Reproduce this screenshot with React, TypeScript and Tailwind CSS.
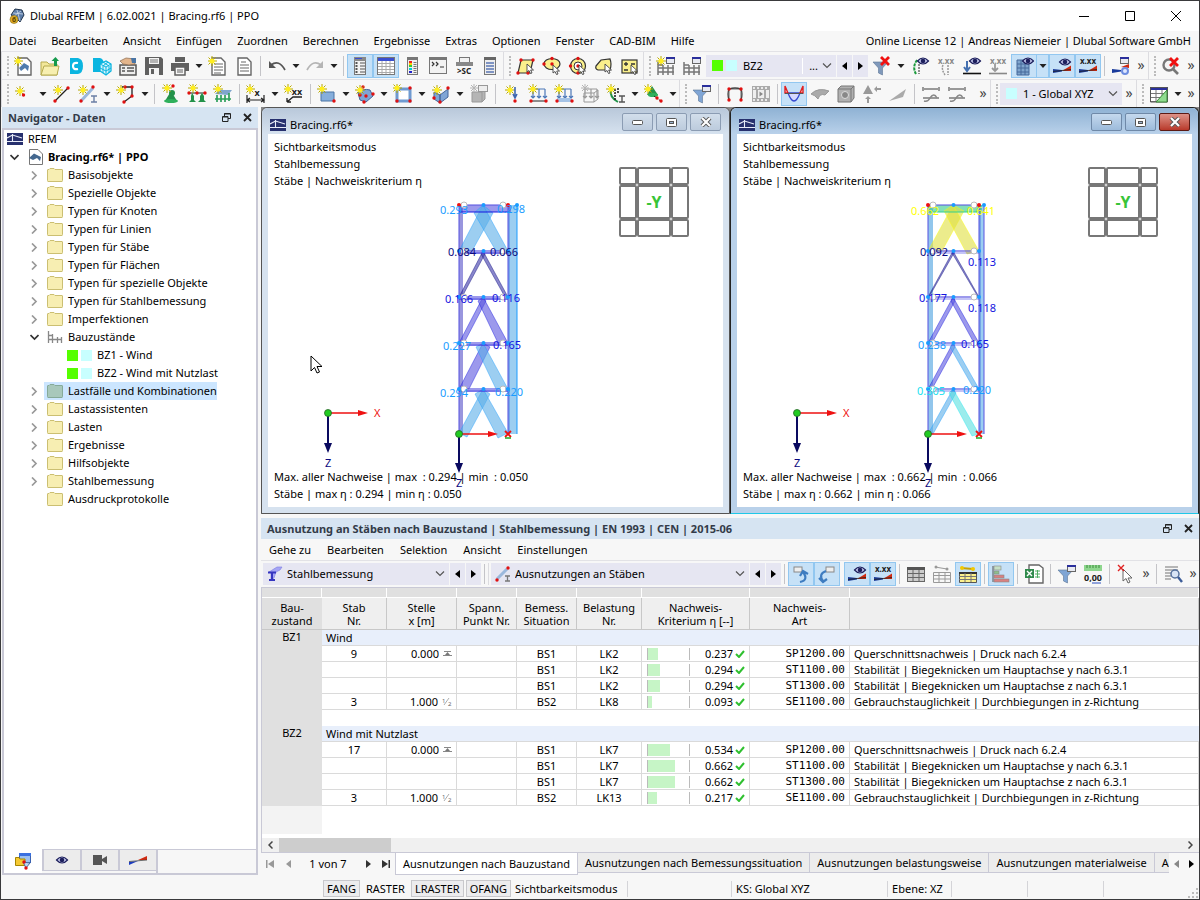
import React, { ReactNode } from 'react';

type IconProps = { name: string };

const star = (x: number, y: number) => (
  <g transform={`translate(${x} ${y})`}>
    <path d="M0-5V5M-5 0H5M-3.5-3.5L3.5 3.5M3.5-3.5L-3.5 3.5" stroke="#b8a800" strokeWidth="1" />
    <circle r="2.6" fill="#ffee20" />
  </g>
);
const dot = (x: number, y: number) => <circle cx={x} cy={y} r="1.7" fill="#e01010" />;
const eye = (x: number, y: number) => (
  <g transform={`translate(${x} ${y})`}>
    <path d="M-5.500 0Q0-6 5.500 0Q0 6-5.500 0Z" fill="#c8ccf0" stroke="#1d1f5c" strokeWidth="1.200" />
    <circle r="2.300" fill="#1d1f5c" />
  </g>
);
const digits = (y: number, color: string) => (
  <text x="10" y={y} textAnchor="middle" fontSize="8" fontWeight="700" fill={color}>x.xx</text>
);
const cursor = (x: number, y: number) => (
  <path transform={`translate(${x} ${y})`} d="M0 0V8L2 6.500L3.500 9.500L5 9L3.700 6H6.500Z" fill="#fff" stroke="#444" strokeWidth="0.9" />
);
const wedge = <path d="M1 17V13L10 14V15.500Z" fill="#1b3c9c" />;
const redWedge = <path d="M10 15L19 9.500V15Z" fill="#d02a10" />;
const resultLine = <path d="M1 15.500L19 13.500" stroke="#222" strokeWidth="0.800" />;
const page = <path d="M4 2H13L17 6V19H4Z" fill="#fff" stroke="#666" strokeWidth="1.4" />;
const miniWindow = (x: number, y: number) => (
  <g transform={`translate(${x} ${y})`}>
    <rect x="0.500" y="0.500" width="8" height="6" fill="#e8eaf2" stroke="#666" />
    <rect width="9" height="2" fill="#2a2f9c" />
  </g>
);
const funnel = (color: string) => <path d="M1 6H16L10.500 12V19L6.500 17V12Z" fill={color} stroke="#5c7696" strokeWidth="0.6" />;
const frames = (color: string) => <path d="M2 6V19M7 9V19M12 9V19M17 9V19M2 9H7M2 12H18M2 16H18" stroke={color} strokeWidth="1.5" />;
const loadArrows = (color: string) => <path d="M4 5H17M5 5V14M11 5V14M17 5V14M3 12L5 14L7 12M9 12L11 14L13 12M15 12L17 14L19 12" stroke={color} strokeWidth="1.2" fill="none" />;
const tableGrid = (head: string, line: string, fill: string) => (
  <g>
    <rect x="1.500" y="3.500" width="17" height="14" fill={fill} stroke={line} />
    <rect x="1" y="3" width="18" height="3" fill={head} />
    <path d="M2 9.500H18M2 13.500H18M7 6V18M13 6V18" stroke={line} />
  </g>
);
const redCross = (x: number, y: number) => (
  <path transform={`translate(${x} ${y})`} d="M0 0L8 8M8 0L0 8" stroke="#f01010" strokeWidth="2.800" />
);
const quad = 'M5 4H17L14 17H2Z';

const icons: Record<string, ReactNode> = {
  newModel: <g>{page}<path d="M5 12L10 7L15 10L14 15L11 12L7 15Z" fill="#4f7cae" />{star(4, 5)}</g>,
  open: <g><path d="M1 6H7L9 8H17V19H1Z" fill="#f2e79a" stroke="#b5aa4f" /><path d="M1 19L4 10H19L17 19Z" fill="#f7efb0" stroke="#b5aa4f" /><path d="M14 10V5H11.500L15.500 1L19 5H17V10Z" fill="#149a4c" /></g>,
  center: <g><path d="M4 2H12Q17 3 17 10Q17 17 12 18H4Z" fill="#0bb5e0" /><path d="M12 7Q7 6 7 10Q7 14 12 13" fill="none" stroke="#fff" strokeWidth="2.200" /></g>,
  blocks: <g><path d="M1 2H8Q12 3 12 9V16H1Z" fill="#0bb5e0" /><path d="M8 8L14 5L19 8V15L14 19L8 15Z" fill="#d5f3fc" stroke="#0bb5e0" strokeWidth="1.300" /><path d="M8 8L14 11L19 8M14 11V19M8 12L14 15L19 12M11 6L17 10V17M16 6L11 10V17" stroke="#0bb5e0" fill="none" /></g>,
  manage: <g><rect x="2" y="9" width="16" height="10" fill="#eee" stroke="#555" strokeWidth="1.500" /><path d="M4 12H7M9 12H16M4 15H7M9 15H16" stroke="#555" strokeWidth="1.300" /><path d="M2 5L8 2L17 3V8L11 9L5 8Z" fill="#e3b58c" stroke="#8a6a50" strokeWidth="0.700" /><path d="M13 2H18V7H14Z" fill="#4a75a5" /></g>,
  save: <g><path d="M1 1H17L19 3V19H1Z" fill="#606060" /><rect x="5" y="2" width="10" height="6" fill="#f4f4f4" /><path d="M6 4H14M6 6H14" stroke="#777" /><rect x="5" y="12" width="10" height="7" fill="#f4f4f4" /><rect x="7" y="13" width="3" height="5" fill="#606060" /></g>,
  print: <g><rect x="5" y="1" width="10" height="5" fill="#606060" /><path d="M1 7H19V15H1Z" fill="#606060" /><rect x="5" y="11" width="10" height="8" fill="#f8f8f8" stroke="#606060" strokeWidth="1.500" /><path d="M7 14H13M7 16H13" stroke="#606060" /></g>,
  newReport: <g>{page}<path d="M6 8H15M6 11H15M6 14H15M6 17H13" stroke="#666" />{star(4, 5)}</g>,
  report: <g>{page}<path d="M7 6H12M6 9H15M6 12H15M6 15H15" stroke="#666" strokeWidth="1.200" /></g>,
  undo: <g><path d="M4 9Q12 3 18 14" fill="none" stroke="#555" strokeWidth="1.700" /><path d="M2 5V12H9Z" fill="#555" /></g>,
  redo: <g><path d="M16 9Q8 3 2 14" fill="none" stroke="#b5b5b5" strokeWidth="1.700" /><path d="M18 5V12H11Z" fill="#b5b5b5" /></g>,
  panelNav: <g><rect x="4.500" y="1.500" width="11" height="17" fill="#f2f2f2" stroke="#777" /><rect x="4" y="1" width="12" height="4" fill="#888" /><path d="M5 2.500H12" stroke="#3a4fd0" /><path d="M10 7H15M10 10H15M10 13H15M10 16H15" stroke="#555" /><path d="M6.500 6V17" stroke="#555" strokeWidth="2" strokeDasharray="2 1" /></g>,
  panelTable: <g><rect x="1.500" y="1.500" width="17" height="17" fill="#fff" stroke="#777" /><rect x="2" y="2" width="16" height="3" fill="#3a4fd0" /><path d="M2 7.500H18M2 10.500H18M2 13.500H18M2 16.500H18M6 5V18M10 5V18M14 5V18" stroke="#aaa" /></g>,
  panelColor: <g><rect x="5.500" y="1.500" width="10" height="17" fill="#eee" stroke="#777" /><rect x="5" y="1" width="11" height="3" fill="#777" /><path d="M7 6H10" stroke="#e22" strokeWidth="2" /><path d="M7 8H10" stroke="#fc0" strokeWidth="2" /><path d="M7 10H10" stroke="#3c3" strokeWidth="2" /><path d="M7 13H10" stroke="#0cd" strokeWidth="2" /><path d="M7 16H10" stroke="#22c" strokeWidth="2" /><path d="M13 6V17" stroke="#777" strokeDasharray="1 1" strokeWidth="3" /></g>,
  console: <g><rect x="1.500" y="1.500" width="17" height="16" fill="#f2f2f2" stroke="#777" /><rect x="1" y="1" width="18" height="3" fill="#777" /><path d="M4 6L6 8L4 10M8 6L10 8L8 10M12 11H16" fill="none" stroke="#333" strokeWidth="1.200" /></g>,
  script: <g><rect x="5.500" y="1.500" width="10" height="6" fill="#f2f2f2" stroke="#777" /><rect x="2" y="6" width="17" height="4" fill="#888" /><text x="10" y="18" textAnchor="middle" fontSize="8" fontWeight="700" fill="#222">&gt;SC</text></g>,
  panelList: <g><rect x="4.500" y="1.500" width="11" height="17" fill="#eee" stroke="#777" /><rect x="4" y="1" width="12" height="3" fill="#666" /><path d="M6 7H14M6 10H14M6 13H14M6 16H14" stroke="#5b77b5" strokeWidth="1.500" /></g>,
  selPoly: <g><path d={quad} fill="#fbf08c" stroke="#333" strokeWidth="1.200" />{dot(5, 4)}{dot(17, 4)}{dot(2, 17)}{dot(12, 17)}{cursor(11, 8)}</g>,
  selEllipse: <g><ellipse cx="10" cy="8" rx="8" ry="5.500" fill="#fbf08c" stroke="#333" strokeWidth="1.200" />{dot(2, 8)}{dot(10, 2.5)}{dot(10, 8)}{cursor(11, 9)}</g>,
  selRing: <g><circle cx="10" cy="10" r="7.500" fill="#fbf08c" stroke="#333" strokeWidth="1.200" /><circle cx="10" cy="10" r="4" fill="#fff" stroke="#333" />{dot(10, 2.5)}{dot(2.5, 10)}{dot(10, 10)}{dot(10, 17)}{cursor(11, 9)}</g>,
  selLasso: <g><path d="M2 10L7 4L16 3Q18 8 16 14Q8 14 4 14Q1 13 2 10Z" fill="#fbf08c" stroke="#333" strokeWidth="1.200" />{cursor(11, 8)}</g>,
  selSpecial: <g><rect x="2" y="4" width="15" height="13" fill="#fbf08c" stroke="#333" strokeWidth="1.200" /><path d="M4 8H8M6 6V10M4 14H8M11 8H15" stroke="#333" strokeWidth="1.300" />{cursor(11, 9)}</g>,
  newStage: <g>{frames('#777')}{miniWindow(10, 1)}{star(5, 5)}</g>,
  editStage: <g>{frames('#777')}{miniWindow(10, 1)}</g>,
  filterOff: <g>{funnel('#8099bb')}{redCross(9, 1)}</g>,
  eyeDef: <g><path d="M7 4Q2 11 6 18" fill="none" stroke="#1a9a3c" strokeWidth="2" strokeDasharray="3 1" /><path d="M9 8V18" stroke="#222" strokeDasharray="2 1" />{eye(13, 5)}</g>,
  valDef: <g>{digits(8, '#888')}<path d="M7 9Q5 13 9 19M12 9V19" fill="none" stroke="#999" strokeWidth="1.500" strokeDasharray="2 1" /></g>,
  eyeReact: <g><path d="M5 5V14M2 11L5 15L8 11" stroke="#4470b0" strokeWidth="2" fill="none" /><path d="M1 17.500H19" stroke="#111" strokeWidth="1.600" />{eye(13, 5)}</g>,
  valReact: <g>{digits(8, '#888')}<path d="M7 8V15M4 12L7 15L10 12" stroke="#999" strokeWidth="1.800" fill="none" /><path d="M1 17.500H19" stroke="#888" strokeWidth="1.600" /></g>,
  eyeGrid: <g><path d="M3 4H15V19H3Z" fill="#7fa5cd" stroke="#47699a" /><path d="M7 4V19M11 4V19M3 8H15M3 12H15M3 16H15" stroke="#47699a" />{eye(14, 5)}</g>,
  eyeResult: <g>{wedge}{redWedge}{resultLine}{eye(13, 6)}</g>,
  valResult: <g>{wedge}{redWedge}{resultLine}{digits(8, '#222')}</g>,
  resultCfg: <g>{wedge}{miniWindow(9, 1)}<path d="M10 11L18 8V12Z" fill="#d02a10" /><circle cx="14" cy="15" r="3" fill="#dfe8ff" stroke="#6d8de0" strokeWidth="2" /></g>,
  findOff: <g><circle cx="8" cy="9" r="5.500" fill="#f4f4f4" stroke="#777" strokeWidth="2.400" /><path d="M12 13L17 18" stroke="#777" strokeWidth="2.600" />{redCross(9, 2)}</g>,
  node: <g>{star(6, 7)}{dot(9.5, 11)}</g>,
  line: <g><path d="M3 17L16 4" stroke="#222" strokeWidth="1.300" />{dot(3, 17)}{dot(16, 4)}{star(6, 6)}</g>,
  member: <g><path d="M3 17L15 4" stroke="#9bb8dc" strokeWidth="3" />{dot(3, 17)}{dot(15, 3)}{star(5, 6)}<path d="M13 12H19M13 18H19M16 12V18" stroke="#6b7fa5" strokeWidth="1.400" /></g>,
  polyline: <g><path d="M6 3H16V12L8 18" fill="none" stroke="#222" strokeWidth="1.300" />{dot(9, 3)}{dot(16, 3)}{dot(16, 12)}{dot(8, 18)}{star(5, 6)}</g>,
  support: <g><path d="M10 7L16 17H4Z" fill="#23924a" /><ellipse cx="10" cy="17" rx="7" ry="2" fill="#2fb05c" /><circle cx="11" cy="9" r="3" fill="#23924a" />{dot(12, 2)}{star(6, 4)}</g>,
  lineSupport: <g><path d="M2 9H18" stroke="#222" /><path d="M5 9L7 12V16L9 18H2L4 16V12ZM15 9L17 12V16L19 18H11L13 16V12Z" fill="#23924a" />{dot(10, 9)}{dot(18, 9)}{dot(2, 9)}{star(6, 4)}</g>,
  areaSupport: <g><path d="M2 10L6 6H19L15 11Z" fill="#7fa5cd" /><path d="M4 11V18M8 11V18M12 11V18M16 9V17M2 15H18" stroke="#2fa05c" strokeWidth="1.700" />{star(5, 5)}</g>,
  dimension: <g><path d="M1 11V19M18 11V19M1 16H18M4 14L1 16L4 18M15 14L18 16L15 18" stroke="#222" strokeWidth="1.200" fill="none" /><text x="11" y="12" textAnchor="middle" fontSize="9" fontWeight="700" fill="#222">x</text>{star(4, 5)}</g>,
  coord: <g><path d="M3 18L9 13H18M3 18V14M3 18H7" stroke="#222" fill="none" strokeWidth="1.300" /><text x="13" y="11" textAnchor="middle" fontSize="9" fontWeight="700" fill="#222">xx</text>{star(4, 5)}</g>,
  surface: <g><path d="M4 8H17V17H4Z" fill="#86aedb" stroke="#4a75a5" />{dot(17, 17)}{star(5, 5)}</g>,
  solid: <g><path d="M3 9Q8 4 15 6L18 12L11 18L5 16Z" fill="#7fa5d5" stroke="#43659a" />{dot(8, 3)}{dot(5, 11)}{dot(11, 12)}{dot(18, 10)}{dot(9, 18)}{star(5, 6)}</g>,
  opening: <g><rect x="4" y="5" width="13" height="12" fill="#fff" stroke="#6f9ad0" strokeWidth="3" />{dot(4, 4)}{dot(17, 4)}{dot(4, 17)}{dot(17, 17)}{star(4, 4)}</g>,
  member3d: <g><path d="M3 8L9 11V19L3 15ZM9 11L17 5V13L9 19Z" fill="#7fa5d5" stroke="#43659a" />{dot(3, 14)}{dot(17, 4)}{dot(9, 18)}{star(6, 6)}</g>,
  boxGray: <g><path d="M3 8H13V18H3ZM13 8L16 5V15L13 18" fill="#b5b5b5" stroke="#999" /><rect x="9.500" y="1.500" width="9" height="6" fill="#eee" stroke="#999" /><path d="M5 0V8M1 4H9M2 1L8 7M8 1L2 7" stroke="#b5b5b5" /></g>,
  loadNode: <g>{star(8, 6)}<path d="M13 3V13M11 10L13 14L15 10" stroke="#3f68b0" strokeWidth="1.600" fill="none" />{dot(13, 17)}</g>,
  loadMember: <g>{loadArrows('#4c78b8')}<path d="M3 17H18" stroke="#222" />{dot(3, 17)}{dot(18, 17)}{star(5, 5)}</g>,
  loadSurface: <g>{loadArrows('#4c78b8')}<rect x="3" y="14" width="15" height="4" fill="#a5c3e6" />{dot(3, 17)}{dot(18, 17)}{star(5, 5)}</g>,
  loadSolid: <g>{loadArrows('#999')}<path d="M4 9H14V18H4ZM14 9L18 6V15L14 18" fill="none" stroke="#999" /><path d="M5 0V8M1 4H9M2 1L8 7M8 1L2 7" stroke="#b5b5b5" /></g>,
  imperfect: <g><path d="M5 5Q3 13 12 18" stroke="#23924a" strokeWidth="2" fill="none" /><path d="M9 5V17M12 4V10" stroke="#222" strokeDasharray="2 1" strokeWidth="1.600" />{star(5, 5)}<path d="M13 12H19M13 18H19M16 12V18" stroke="#555" strokeWidth="1.400" /></g>,
  release: <g><path d="M8 2L14 11H3Z" fill="#23924a" /><ellipse cx="9" cy="11" rx="5" ry="2" fill="#2fb05c" /><path d="M10 12L18 18" stroke="#222" strokeDasharray="2 1" />{dot(13, 14)}{dot(17, 17)}{star(4, 5)}</g>,
  filterWin: <g>{funnel('#7fa5d5')}{miniWindow(10, 1)}</g>,
  deform: <g><path d="M4 16V5H16V16" fill="none" stroke="#999" strokeWidth="1.500" /><path d="M4 16Q2 10 4 5Q10 3 16 5Q18 10 16 16" fill="none" stroke="#444" strokeWidth="1.300" />{dot(4, 5)}{dot(16, 5)}{dot(4, 16)}{dot(16, 16)}</g>,
  film: <g><rect x="1" y="2" width="18" height="16" fill="#aaa" /><path d="M2 4H18M2 16H18" stroke="#fff" strokeWidth="1.500" strokeDasharray="2 2" /><path d="M2 6H5V14H2ZM7 6H13V14H7ZM15 6H18V14H15Z" fill="#eee" /><path d="M8.500 7.500V12.500L12 10Z" fill="#888" /></g>,
  moment: <g><path d="M4 9Q10 25 16 9Z" fill="#d5d8ff" stroke="#3347d0" strokeWidth="1.300" /><path d="M1 9V2L4 9ZM19 9V2L16 9Z" fill="#f8d8d8" stroke="#e02020" strokeWidth="1.400" /><path d="M1 9.500H19" stroke="#555" /></g>,
  surfGray: <path d="M1 10Q8 3 19 7L15 11Q10 9 8 15Q5 11 1 10Z" fill="#aaa" stroke="#999" />,
  solidGray: <g><path d="M2 5L5 2H18V14L15 18H2Z" fill="#b0b0b0" stroke="#777" /><path d="M2 5H15V18M15 5L18 2" fill="none" stroke="#777" /><circle cx="9" cy="11" r="3.500" fill="#888" stroke="#ddd" /></g>,
  stressGray: <g><path d="M6 1L11 10H1ZM6 12L9 15H7V19H5V15H3Z" fill="#999" /><path d="M12 5L15 2V4H19V6H15V8Z" fill="#999" /></g>,
  wedgeGray: <path d="M1 17L18 5L15 13Z" fill="#aaa" />,
  bars1: <g><path d="M2 5H18M2 14H18" stroke="#999" strokeWidth="2" /><path d="M3 17Q7 18 9 14Q13 8 16 14" fill="none" stroke="#888" strokeWidth="1.500" /><path d="M2 3V7M18 3V7" stroke="#999" strokeWidth="2" /></g>,
  calc: <g>{tableGrid('#2a2f9c', '#777', '#fff')}<path d="M1.500 3.500H18.500V18H1.500Z" fill="none" stroke="#555" /><path d="M18 6V18H7Z" fill="#8fdc8f" stroke="#3c8c3c" /></g>,
  jumpUp: <g><rect x="3" y="3" width="8" height="5" fill="#eee" stroke="#888" /><path d="M9 18Q18 16 12 8M9 12L12 7L17 10" fill="none" stroke="#3e7cc0" strokeWidth="2.200" /></g>,
  jumpDown: <g><rect x="9" y="3" width="8" height="5" fill="#eee" stroke="#888" /><path d="M9 7Q1 10 6 17M2 14L6 18L10 15" fill="none" stroke="#3e7cc0" strokeWidth="2.200" /></g>,
  tableDark: tableGrid('#555', '#666', '#ccc'),
  tableLine: <g><path d="M3 3L15 5" stroke="#999" /><circle cx="4" cy="3" r="1.500" fill="#999" /><circle cx="15" cy="5" r="1.500" fill="#999" /><path d="M1.500 8.500H18.500V18.500H1.500ZM1 11.500H18M1 15H18M7 8V18M13 8V18" fill="none" stroke="#999" /></g>,
  tableYellow: <g><path d="M3 4L15 5" stroke="#c8a200" strokeWidth="2" /><circle cx="4" cy="4" r="2" fill="#f2c800" /><circle cx="15" cy="5" r="2" fill="#f2c800" /><path d="M1.500 8.500H18.500V18.500H1.500Z" fill="#fbf08c" stroke="#555" /><path d="M1 9H19" stroke="#333" strokeWidth="2" /><path d="M1 12.500H18M1 15.500H18M7 9V18M13 9V18" stroke="#777" /></g>,
  chart: <g><path d="M2 2V18" stroke="#555" /><rect x="3" y="2" width="7" height="4" fill="#c5dfc5" stroke="#888" strokeWidth="0.600" /><rect x="3" y="7" width="5" height="3" fill="#8cc08c" stroke="#888" strokeWidth="0.600" /><rect x="3" y="11" width="10" height="3" fill="#d98080" stroke="#888" strokeWidth="0.600" /><rect x="3" y="15" width="15" height="3" fill="#d98080" stroke="#888" strokeWidth="0.600" /></g>,
  excel: <g><path d="M5 1H15L19 4V19H5Z" fill="#fff" stroke="#666" strokeWidth="1.400" /><rect x="1" y="5" width="9" height="9" fill="#2f8a4c" /><path d="M3 7L8 12M8 7L3 12" stroke="#fff" strokeWidth="1.400" /><path d="M11 7H16M11 10H16M11 13H16M13.500 6V14" stroke="#4fae62" /></g>,
  decimals: <g><rect x="1" y="1" width="18" height="6" fill="#8ed68e" /><path d="M4 1V4M7 1V4M10 1V4M13 1V4M16 1V4" stroke="#3c8c3c" /><text x="10" y="17" textAnchor="middle" fontSize="9" fontWeight="700" fill="#222">0,00</text><path d="M9 19H18" stroke="#2a4fc0" /></g>,
  deselect: <g><path d="M7 5V17L10 14.500L12 19L14 18L12 14H16Z" fill="#fff" stroke="#666" /><path d="M2 1L8 7M8 1L2 7" stroke="#e02020" strokeWidth="1.400" /></g>,
  findText: <g><path d="M2 3H15M2 6H15M2 9H8M2 12H8M2 15H8" stroke="#777" strokeWidth="1.200" /><circle cx="12" cy="10" r="4" fill="#d8e4f5" stroke="#55709c" strokeWidth="1.500" /><path d="M15 13L19 18" stroke="#3c5c98" strokeWidth="2.400" /></g>,
  steel: <g><path d="M4 8L12 3H17L15 6L11 8L9 14L6 16V9Z" fill="#a5a5f5" stroke="#7a7ae0" strokeWidth="0.600" /><path d="M3 8.500H11M4 16H10M7 8V16" stroke="#3535c0" strokeWidth="2" /></g>,
  memberSel: <g><path d="M4 15L14 5" stroke="#9bb8dc" strokeWidth="3" />{dot(4, 16)}{dot(15, 4)}<path d="M12 12H17M12 17H17M14.500 12V17" stroke="#777" strokeWidth="1.300" /></g>,
  navData: <g><rect x="6.500" y="2.500" width="11" height="9" fill="#9cc0f0" stroke="#3a62b0" /><rect x="6" y="2" width="12" height="3" fill="#3a70e0" /><path d="M2.500 6.500H6L7 8H12V14.500H2.500Z" fill="#f5c932" stroke="#a88600" /><path d="M10 11L17 12L13 17Z" fill="#bcd5f2" stroke="#4a6ca0" />{dot(11, 11)}{dot(13, 17)}</g>,
  navEye: eye(10, 10),
  navCamera: <g><rect x="3" y="5" width="9" height="10" fill="#555" /><path d="M12 9L17 6V14L12 11Z" fill="#555" /></g>,
  navResult: <g><path d="M1 12V15L10 11Z" fill="#1b3cc0" /><path d="M10 10L19 6V10Z" fill="#d02a10" /><path d="M1 11.500L19 10" stroke="#333" strokeWidth="0.700" /></g>,
};

function Icon({ name }: IconProps) {
  return <svg width="20" height="20" viewBox="0 0 20 20" fill="none" className="shrink-0">{icons[name]}</svg>;
}

function Tool({ name, on }: { name: string, on?: boolean }) {
  return (
    <button
      aria-label={name}
      className={on
        ? "flex h-6 w-[26px] shrink-0 items-center justify-center border border-[#92c7f0] bg-[#c6e1f7]"
        : "flex h-6 w-[26px] shrink-0 items-center justify-center"}
    >
      <Icon name={name} />
    </button>
  );
}

function Tools({ names, on }: { names: string, on?: boolean }) {
  return <>{names.split(' ').map(n => <Tool key={n} name={n} on={on} />)}</>;
}

function Drop({ on }: { on?: boolean }) {
  return (
    <button
      aria-label="Mehr"
      className={on
        ? "flex h-6 w-3 shrink-0 items-center justify-center border border-l-0 border-[#92c7f0] bg-[#c6e1f7]"
        : "flex h-6 w-3 shrink-0 items-center justify-center"}
    >
      <svg width="8" height="4" viewBox="0 0 8 4" className="shrink-0"><path d="M0.500 0H7.500L4 4Z" fill="#222" /></svg>
    </button>
  );
}

const Sep = () => <div className="flex h-5 w-[7px] shrink-0 justify-center"><div className="w-px bg-[#c4c4c8]" /></div>;

const Group = () => (
  <div className="flex h-7 w-[10px] shrink-0 items-center gap-1 border-l border-[#dcdce0]">
    <div className="w-px" />
    <div className="h-5 border-l-2 border-dotted border-[#bbb]" />
  </div>
);

const More = () => <button className="w-3.5 shrink-0 pb-0.5 text-center text-sm leading-4 text-[#444]">»</button>;

function Arrow({ left, bare }: { left?: boolean, bare?: boolean }) {
  return (
    <button
      aria-label={left ? "Zurück" : "Weiter"}
      className={bare ? "flex h-[22px] w-[15px] shrink-0 items-center justify-center" : "flex h-[22px] w-[15px] shrink-0 items-center justify-center bg-[#e6e6f2]"}
    >
      <svg width="5" height="8" viewBox="0 0 5 8"><path d={left ? "M5 0V8L0 4Z" : "M0 0V8L5 4Z"} fill={bare && left ? '#888' : '#000'} /></svg>
    </button>
  );
}

const Chevron = () => (
  <svg width="10" height="6" viewBox="0 0 10 6" className="pointer-events-none mr-1 shrink-0"><path d="M1 0.500L5 4.500L9 0.500" fill="none" stroke="#555" strokeWidth="1.200" /></svg>
);

function Combo({ label, value, children, extra, width }: { label: string, value: string, children?: ReactNode, extra?: ReactNode, width: string }) {
  return (
    <label className={`flex h-[22px] shrink-0 items-center bg-[#e6e6f2] pl-0.5 ${width}`}>
      {children}
      <select aria-label={label} className="h-full min-w-0 flex-1 appearance-none bg-transparent pl-0.5 outline-none">
        <option>{value}</option>
      </select>
      {extra}
      <Chevron />
    </label>
  );
}

function Swatches() {
  return (
    <span className="flex shrink-0 gap-[3px]">
      <span className="size-[11px] bg-[#55ff00]" />
      <span className="size-[11px] bg-[#c8ffff]" />
    </span>
  );
}

function PanelHeader({ title }: { title: string }) {
  return (
    <div className="flex h-[21px] items-center bg-[#d6e4f2] pl-1.5 font-bold text-[#333b48]">
      <h2 className="flex-1 whitespace-nowrap">{title}</h2>
      <button aria-label="Abdocken" className="flex w-[21px] justify-center">
        <svg width="9" height="9" viewBox="0 0 9 9" fill="none" stroke="#222"><path d="M2.500 3V0.500H8.500V5.500H6M0.500 3.500H6V8.500H0.500ZM2 1H8M1 4H6" /></svg>
      </button>
      <button aria-label="Schließen" className="flex w-[21px] justify-center">
        <svg width="9" height="9" viewBox="0 0 9 9"><path d="M1 1L8 8M8 1L1 8" stroke="#222" strokeWidth="1.800" /></svg>
      </button>
    </div>
  );
}

const menu = ['Datei', 'Bearbeiten', 'Ansicht', 'Einfügen', 'Zuordnen', 'Berechnen', 'Ergebnisse', 'Extras', 'Optionen', 'Fenster', 'CAD-BIM', 'Hilfe'];

function TitleBar() {
  return (
    <header>
      <div className="flex h-[30px] items-center bg-white pl-2">
        <svg width="16" height="16" viewBox="0 0 16 16">
          <path d="M2 7L6 1L13 2L15 7L11 14L7 10Z" fill="#5c7ca8" stroke="#22344c" />
          <path d="M4 5L14 6M8 2L11 13M5 8L12 3" stroke="#cfdcec" strokeWidth="0.800" />
          <circle cx="5" cy="11.500" r="4" fill="#e0ae28" stroke="#8a6a10" strokeWidth="0.600" />
          <text x="5" y="14" textAnchor="middle" fontSize="7" fontWeight="700" fill="#5a4300">6</text>
        </svg>
        <h1 className="flex-1 pl-[5px]">Dlubal RFEM | 6.02.0021 | Bracing.rf6 | PPO</h1>
        <button aria-label="Minimieren" className="flex w-[46px] justify-center"><svg width="10" height="10" viewBox="0 0 10 10"><path d="M0 5.500H10" stroke="#000" /></svg></button>
        <button aria-label="Maximieren" className="flex w-[46px] justify-center"><svg width="10" height="10" viewBox="0 0 10 10"><path d="M0.500 0.500H9.500V9.500H0.500Z" fill="none" stroke="#000" /></svg></button>
        <button aria-label="Beenden" className="flex w-[46px] justify-center"><svg width="10" height="10" viewBox="0 0 10 10"><path d="M0 0L10 10M10 0L0 10" stroke="#000" /></svg></button>
      </div>
      <nav className="flex h-5 items-center gap-[15px] px-2 whitespace-nowrap">
        {menu.map(m => <button key={m}>{m}</button>)}
        <span className="flex-1 text-right">Online License 12 | Andreas Niemeier | Dlubal Software GmbH</span>
      </nav>
    </header>
  );
}

function Toolbars() {
  return (
    <div className="overflow-hidden">
      <div className="flex h-7 items-center border-t border-[#e2e2e6]">
        <Group />
        <Tools names="newModel open center blocks manage save print" /><Drop />
        <Tools names="newReport report" /><Sep />
        <Tool name="undo" /><Drop />
        <Tool name="redo" /><Drop /><Sep />
        <Tools names="panelNav panelTable" on />
        <Tools names="panelColor console script panelList" />
        <Group />
        <Tools names="selPoly selEllipse selRing selLasso selSpecial" />
        <Group />
        <Tools names="newStage editStage" />
        <div className="flex gap-px px-px">
          <Combo label="Bauzustand" value="BZ2" width="w-[130px]" extra={<span className="mr-1 border-l border-white pl-1.5">...</span>}>
            <span className="mx-1"><Swatches /></span>
          </Combo>
          <Arrow left /><Arrow />
        </div>
        <Tool name="filterOff" /><Drop />
        <Tools names="eyeDef valDef eyeReact valReact" />
        <Tool name="eyeGrid" on /><Drop on />
        <Tools names="eyeResult valResult" on /><Sep />
        <Tool name="resultCfg" /><More />
        <Group />
        <Tool name="findOff" /><More />
      </div>
      <div className="flex h-7 items-center border-t border-[#e2e2e6]">
        <Group />
        <Tool name="node" /><Drop />
        <Tools names="line member" /><Drop />
        <Tool name="polyline" /><Drop /><Sep />
        <Tools names="support lineSupport areaSupport" /><Sep />
        <Tool name="dimension" /><Drop />
        <Tool name="coord" /><Sep />
        <Tool name="surface" /><Drop />
        <Tool name="solid" /><Drop />
        <Tool name="opening" /><Drop />
        <Tool name="member3d" /><Drop />
        <Tool name="boxGray" /><Sep />
        <Tools names="loadNode loadMember loadSurface loadSolid imperfect" /><Drop />
        <Tool name="release" /><Drop />
        <Group />
        <Tool name="filterWin" /><Sep />
        <Tools names="deform film" /><Sep />
        <Tool name="moment" on />
        <Tools names="surfGray solidGray stressGray wedgeGray" /><Sep />
        <Tool name="bars1" /><Tool name="bars1" />
        <div className="w-1.5 shrink-0" />
        <More />
        <Group />
        <Combo label="Koordinatensystem" value="1 - Global XYZ" width="w-[122px]">
          <span className="mx-1 size-[11px] shrink-0 bg-[#c8ffff]" />
        </Combo>
        <More />
        <Group />
        <Tool name="calc" /><Drop /><More />
      </div>
    </div>
  );
}

const RfemLogo = () => (
  <svg width="16" height="12" viewBox="0 0 16 12" className="shrink-0">
    <rect width="16" height="12" fill="#27306e" />
    <path d="M0 8.500H16M5.500 1V8M0 5L5.500 2L15 5" fill="none" stroke="#e8ecf8" strokeWidth="1.100" />
  </svg>
);

const Expander = ({ open }: { open?: boolean }) => (
  <button aria-label={open ? "Zuklappen" : "Aufklappen"} className="flex w-3 shrink-0 justify-center">
    <svg width="9" height="9" viewBox="0 0 9 9" fill="none">
      {open ? <path d="M0.500 2L4.500 6L8.500 2" stroke="#333" strokeWidth="1.700" /> : <path d="M2 0.500L6 4.500L2 8.500" stroke="#999" strokeWidth="1.700" />}
    </svg>
  </button>
);

const Folder = ({ active }: { active?: boolean }) => (
  <svg width="16" height="14" viewBox="0 0 16 14" className="shrink-0">
    <path d="M0.500 12.500V2Q0.500 1.500 1 1.500H2L3 0.500H7L8 1.500H15Q15.500 1.500 15.500 2V12.500Q15.500 13.500 15 13.500H1Q0.500 13.500 0.500 12.500Z" fill={active ? '#a8c8bb' : '#f7eeb2'} stroke={active ? '#86aa98' : '#cbbf72'} />
  </svg>
);

const foldersTop = ['Basisobjekte', 'Spezielle Objekte', 'Typen für Knoten', 'Typen für Linien', 'Typen für Stäbe', 'Typen für Flächen', 'Typen für spezielle Objekte', 'Typen für Stahlbemessung', 'Imperfektionen'];
const foldersBottom = ['Lastfälle und Kombinationen', 'Lastassistenten', 'Lasten', 'Ergebnisse', 'Hilfsobjekte', 'Stahlbemessung', 'Ausdruckprotokolle'];

function FolderRow({ name }: { name: string }) {
  const active = name === 'Lastfälle und Kombinationen';
  return (
    <li className="flex h-[18px] items-center pl-6">
      {name === 'Ausdruckprotokolle' ? <span className="w-3 shrink-0" /> : <Expander />}
      <span className={active ? "ml-1 flex h-[18px] items-center gap-[5px] bg-[#cce6ff] pl-[3px]" : "ml-1 flex items-center gap-[5px] pl-[3px]"}>
        <Folder active={active} />{name}
      </span>
    </li>
  );
}

function Navigator() {
  return (
    <aside className="flex w-[257px] shrink-0 flex-col pb-[3px] pl-px">
      <PanelHeader title="Navigator - Daten" />
      <div className="flex flex-1 flex-col border-2 border-[#c9c9d6] bg-white">
        <ul className="flex-1 whitespace-nowrap">
          <li className="flex h-[18px] items-center gap-[5px] pl-[3px]"><RfemLogo />RFEM</li>
          <li className="flex h-[18px] items-center gap-[5px] pl-1 font-bold">
            <Expander open />
            <svg width="14" height="16" viewBox="0 0 14 16" className="ml-1 shrink-0"><path d="M0.500 0.500H9L13.500 5V15.500H0.500Z" fill="#fff" stroke="#777" /><path d="M0 9L5 4.500L12 8L11 12L8 9L4 11Z" fill="#44688f" /></svg>
            Bracing.rf6* | PPO
          </li>
          {foldersTop.map(f => <FolderRow key={f} name={f} />)}
          <li className="flex h-[18px] items-center gap-[5px] pl-6">
            <Expander open />
            <svg width="16" height="12" viewBox="0 0 16 12" className="ml-0.5 shrink-0"><path d="M1.500 0V12M5.500 3V12M10.500 6V12M14.500 6V12M1 4.500H6M1 8.500H15" fill="none" stroke="#888" strokeWidth="1.300" /></svg>
            Bauzustände
          </li>
          <li className="flex h-[18px] items-center gap-[5px] pl-[63px]"><Swatches />BZ1 - Wind</li>
          <li className="flex h-[18px] items-center gap-[5px] pl-[63px]"><Swatches />BZ2 - Wind mit Nutzlast</li>
          {foldersBottom.map(f => <FolderRow key={f} name={f} />)}
        </ul>
        <div className="flex h-6 bg-[#f7f7f7]">
          <button aria-label="Daten" className="flex w-[38px] items-center justify-center bg-white"><Icon name="navData" /></button>
          {['navEye', 'navCamera', 'navResult'].map(n => (
            <button key={n} aria-label={n} className="mb-0.5 flex w-[38px] items-center justify-center border-t border-b border-l-2 border-[#c9c9d6] bg-[#ececec]"><Icon name={n} /></button>
          ))}
          <div className="flex-1 border-t border-l-2 border-[#c9c9d6]" />
        </div>
      </div>
    </aside>
  );
}

type Brace = { pts: string, fill: string, line: string };

type Model = {
  x0: number
  x1: number
  colFill: string
  colWidth: number
  rightWidth: number
  rightLine: string
  leftFill: string
  leftLine: string
  beamFill: string
  beamLine: string
  braces: Brace[]
  labels: { x: number, y: number, t: string, c: string }[]
  thick: number
};

const LIGHT = '#5aaee8';
const SKY = '#1a9cff';
const VIOLET = '#5a55e0';
const BLUE = '#1414e0';
const NAVY = '#0a0a80';
const YELLOW = '#ffff00';

// coordinates share the origin of the view's client area
const modelA: Model = {
  x0: 190, x1: 239, colFill: LIGHT, colWidth: 4, rightWidth: 9, rightLine: SKY, leftFill: '#5550c8', leftLine: VIOLET,
  beamFill: VIOLET, beamLine: BLUE, thick: 4,
  braces: [
    { pts: '214,71 190,117 203,117 224,79', fill: LIGHT, line: SKY },
    { pts: '214,71 239,117 227,117 205,79', fill: LIGHT, line: SKY },
    { pts: '214,117 190,163 193,163 216,120', fill: '#3a35a8', line: NAVY },
    { pts: '214,117 239,163 236,163 212,120', fill: '#3a35a8', line: NAVY },
    { pts: '214,163 190,209 195,209 217,167', fill: VIOLET, line: BLUE },
    { pts: '214,163 239,209 229,209 209,167', fill: VIOLET, line: BLUE },
    { pts: '214,209 190,255 200,255 221,213', fill: VIOLET, line: BLUE },
    { pts: '214,209 239,255 227,255 207,213', fill: LIGHT, line: SKY },
    { pts: '214,255 190,299 198,303 221,260', fill: LIGHT, line: SKY },
    { pts: '214,255 239,299 229,304 206,260', fill: LIGHT, line: SKY },
  ],
  labels: [
    { x: 171, y: 80, t: '0.293', c: SKY }, { x: 228, y: 79, t: '0.298', c: SKY },
    { x: 179, y: 122, t: '0.084', c: NAVY }, { x: 221, y: 122, t: '0.066', c: NAVY },
    { x: 176, y: 169, t: '0.166', c: BLUE }, { x: 223, y: 168, t: '0.116', c: BLUE },
    { x: 174, y: 216, t: '0.227', c: SKY }, { x: 224, y: 215, t: '0.165', c: BLUE },
    { x: 171, y: 263, t: '0.294', c: SKY }, { x: 226, y: 262, t: '0.220', c: SKY },
  ],
};

const modelB: Model = {
  x0: 190, x1: 241, colFill: LIGHT, colWidth: 5, rightWidth: 5, rightLine: VIOLET, leftFill: '#4aa0e0', leftLine: VIOLET,
  beamFill: '#30c888', beamLine: '#30d090', thick: 2,
  braces: [
    { pts: '215,71 190,117 204,117 226,77', fill: '#e0e040', line: YELLOW },
    { pts: '215,71 241,117 229,120 206,77', fill: '#e0e040', line: YELLOW },
    { pts: '215,117 190,163 191,163 216,119', fill: '#3a35a8', line: NAVY },
    { pts: '215,117 241,163 240,163 214,119', fill: '#3a35a8', line: NAVY },
    { pts: '215,163 190,209 194,209 217,167', fill: VIOLET, line: BLUE },
    { pts: '215,163 241,209 236,209 213,167', fill: VIOLET, line: BLUE },
    { pts: '215,209 190,255 194,255 217,213', fill: VIOLET, line: BLUE },
    { pts: '215,209 241,255 236,255 212,213', fill: LIGHT, line: SKY },
    { pts: '215,255 190,300 195,300 218,259', fill: LIGHT, line: SKY },
    { pts: '215,255 241,300 234,302 211,259', fill: '#58e0e0', line: '#20e8f0' },
  ],
  labels: [
    { x: 173, y: 81, t: '0.662', c: YELLOW }, { x: 229, y: 81, t: '0.641', c: YELLOW },
    { x: 182, y: 122, t: '0.092', c: NAVY }, { x: 230, y: 132, t: '0.113', c: BLUE },
    { x: 181, y: 168, t: '0.177', c: BLUE }, { x: 230, y: 178, t: '0.118', c: BLUE },
    { x: 180, y: 215, t: '0.238', c: SKY }, { x: 223, y: 214, t: '0.165', c: BLUE },
    { x: 179, y: 261, t: '0.305', c: '#20dff0' }, { x: 225, y: 260, t: '0.220', c: SKY },
  ],
};

const levels = [71, 117, 163, 209, 255];

function Axes({ x, y, len }: { x: number, y: number, len: number }) {
  return (
    <g>
      <path d={`M${x} ${y}H${x + len - 8}`} stroke="#e11" strokeWidth="1.500" />
      <path d={`M${x + len - 10} ${y - 3}V${y + 3}L${x + len} ${y}Z`} fill="#e11" />
      <path d={`M${x} ${y}V${y + len - 8}`} stroke="#0a0a60" strokeWidth="2" />
      <path d={`M${x - 4} ${y + len - 10}H${x + 4}L${x} ${y + len}Z`} fill="#0a0a60" />
      <circle cx={x} cy={y} r="3.500" fill="#2c2" stroke="#286428" strokeWidth="0.800" />
    </g>
  );
}

function Truss({ model }: { model: Model }) {
  const { x0, x1 } = model;
  const mid = (x0 + x1) / 2;
  return (
    <svg width="300" height="370" viewBox="-1 0 300 370" className="absolute top-0 left-0 text-[11px]">
      <g fillOpacity="0.600">
        <rect x={x0} y="71" width={model.colWidth} height="229" fill={model.leftFill} />
        <rect x={x1} y="71" width="2" height="229" fill={VIOLET} />
        <rect x={x1} y="71" width={model.rightWidth} height="229" fill={model.colFill} />
        <rect x={x0} y="71" width={x1 - x0 + 3} height="7" fill={model.beamFill} />
        {model.braces.map(b => (
          <polygon key={b.pts} points={b.pts} fill={b.fill} stroke={b.line} strokeWidth="0.600" strokeOpacity="0.700" />
        ))}
        {levels.slice(1).map(l => <rect key={l} x={x0} y={l - 1} width={x1 - x0} height={model.thick} fill={VIOLET} />)}
      </g>
      <path d={`M${x0} 71V300M${x1} 71V300M${x0} 71H${x1}`} stroke={model.leftLine} strokeWidth="1.500" strokeOpacity="0.700" />
      <path d={`M${x1 + model.rightWidth} 71V300`} stroke={model.rightLine} />
      <path d={`M${x0} 78H${x1}`} stroke={model.beamLine} />
      {levels.map(l => (
        <g key={l}>
          {l > 71 && <path d={`M${x0} ${l + 2}H${x1}`} stroke={BLUE} strokeOpacity="0.500" />}
          <circle cx={x0 + 5} cy={l} r="3" fill="#fff" stroke="#bbb" />
          <circle cx={x1 - 5} cy={l} r="3" fill="#fff" stroke="#bbb" />
          <circle cx={x0} cy={l} r="2" fill={l === 71 ? '#e11' : SKY} />
          <circle cx={x1} cy={l} r="2" fill={l === 71 ? '#e11' : SKY} />
          <circle cx={mid} cy={l} r="2" fill={SKY} />
        </g>
      ))}
      <circle cx={x1 + model.rightWidth} cy="71" r="2" fill={SKY} />
      {model.labels.map(l => <text key={l.x + ',' + l.y} x={l.x} y={l.y} fill={l.c}>{l.t}</text>)}
      <Axes x={x0} y={300} len={39} />
      <path d={`M${x1 - 3} 297L${x1 + 3} 303M${x1 + 3} 297L${x1 - 3} 303`} stroke="#e11" strokeWidth="1.800" />
      <path d={`M${x1 - 3} 304H${x1 + 3}`} stroke="#2a2" strokeWidth="1.500" />
      <text x={x0 - 3} y="353" fill="#0a0a80">Z</text>
      <Axes x={59} y={279} len={40} />
      <text x="105" y="283" fill="#e11">X</text>
      <text x="56" y="333" fill="#0a0a80">Z</text>
    </svg>
  );
}

const ViewCube = () => (
  <div className="absolute top-[33px] right-[34px] grid size-[70px] grid-cols-[18px_34px_18px] grid-rows-[18px_34px_18px]">
    {[0, 1, 2, 3, 4, 5, 6, 7, 8].map(i => (
      <div key={i} className="flex items-center justify-center rounded-xs border-2 border-[#777] text-base font-bold text-[#38c438]">{i === 4 ? '-Y' : ''}</div>
    ))}
  </div>
);

type ViewProps = { active?: boolean, model: Model, summary: string, summary2: string };

function ModelWindow({ active, model, summary, summary2 }: ViewProps) {
  const button = "flex h-[18px] w-[31px] items-center justify-center rounded-xs border ";
  const plain = active ? "border-[#6f89a8] bg-linear-to-b from-[#c5d9ee] to-[#9dbbdb]" : "border-[#8b9cb3] bg-linear-to-b from-[#d2deeb] to-[#bccbdd]";
  return (
    <section className={active
      ? "flex flex-1 flex-col rounded-t-md border border-[#222] border-b-[#20c8e8] bg-[#b9d1ea] px-1.5 pb-1.5"
      : "flex flex-1 flex-col rounded-t-md border border-[#555] bg-[#d6e2ef] px-1.5 pb-1.5"}>
      <div className={active
        ? "-mx-1.5 flex h-[26px] items-center gap-1 rounded-t-md bg-linear-to-b from-[#8fb2d4] to-[#b9d1ea] px-2 pt-2"
        : "-mx-1.5 flex h-[26px] items-center gap-1 rounded-t-md bg-linear-to-b from-[#b9c8da] to-[#d6e2ef] px-2 pt-2"}>
        <RfemLogo />
        <span className="flex-1">Bracing.rf6*</span>
        <div className="flex gap-[3px] pb-1.5">
          <button aria-label="Minimieren" className={button + plain}><svg width="11" height="5" viewBox="0 0 11 5"><rect x="0.500" y="0.500" width="10" height="4" rx="1" fill="#fff" stroke="#555" /></svg></button>
          <button aria-label="Maximieren" className={button + plain}><svg width="11" height="9" viewBox="0 0 11 9"><rect x="0.500" y="0.500" width="10" height="8" rx="1" fill="#fff" stroke="#555" /><rect x="3.500" y="3.500" width="4" height="2" fill="#9db5d0" stroke="#555" /></svg></button>
          <button aria-label="Schließen" className={button + (active ? "border-[#5c1a14] bg-linear-to-b from-[#dd9288] to-[#b8382a]" : plain)}>
            <svg width="12" height="10" viewBox="0 0 12 10"><path d="M2 1L10 9M10 1L2 9" stroke="#555" strokeWidth="4" /><path d="M2 1L10 9M10 1L2 9" stroke="#fff" strokeWidth="2.200" /></svg>
          </button>
        </div>
      </div>
      <div className="relative flex flex-1 flex-col justify-between bg-white pt-1 pb-[5px] pl-1.5 leading-[17px]">
        <Truss model={model} />
        <ViewCube />
        {!active && (
          <svg width="13" height="20" viewBox="0 0 13 20" className="absolute top-[221px] left-[42px]"><path d="M1 1V16L4.500 12.500L7 18L9.500 17L7 11.500H12Z" fill="#fff" stroke="#000" /></svg>
        )}
        <div className="relative">
          <p>Sichtbarkeitsmodus</p>
          <p>Stahlbemessung</p>
          <p>Stäbe | Nachweiskriterium η</p>
        </div>
        <div className="relative">
          <p className="whitespace-pre">{summary}</p>
          <p>{summary2}</p>
        </div>
      </div>
    </section>
  );
}

type Row = { stab?: string, x?: string, half?: boolean, bs: string, lk: string, eta: number, art: string, text: string };
type Stage = { id: string, name: string, rows: Row[] };

const texts = [
  'Querschnittsnachweis | Druck nach 6.2.4',
  'Stabilität | Biegeknicken um Hauptachse y nach 6.3.1',
  'Stabilität | Biegeknicken um Hauptachse z nach 6.3.1',
  'Gebrauchstauglichkeit | Durchbiegungen in z-Richtung',
];

const stages: Stage[] = [
  {
    id: 'BZ1', name: 'Wind', rows: [
      { stab: '9', x: '0.000', bs: 'BS1', lk: 'LK2', eta: 0.237, art: 'SP1200.00', text: texts[0] },
      { bs: 'BS1', lk: 'LK2', eta: 0.294, art: 'ST1100.00', text: texts[1] },
      { bs: 'BS1', lk: 'LK2', eta: 0.294, art: 'ST1300.00', text: texts[2] },
      { stab: '3', x: '1.000', half: true, bs: 'BS2', lk: 'LK8', eta: 0.093, art: 'SE1100.00', text: texts[3] },
    ]
  },
  {
    id: 'BZ2', name: 'Wind mit Nutzlast', rows: [
      { stab: '17', x: '0.000', bs: 'BS1', lk: 'LK7', eta: 0.534, art: 'SP1200.00', text: texts[0] },
      { bs: 'BS1', lk: 'LK7', eta: 0.662, art: 'ST1100.00', text: texts[1] },
      { bs: 'BS1', lk: 'LK7', eta: 0.662, art: 'ST1300.00', text: texts[2] },
      { stab: '3', x: '1.000', half: true, bs: 'BS2', lk: 'LK13', eta: 0.217, art: 'SE1100.00', text: texts[3] },
    ]
  },
];

const heads = [['Stab', 'Nr.'], ['Stelle', 'x [m]'], ['Spann.', 'Punkt Nr.'], ['Bemess.', 'Situation'], ['Belastung', 'Nr.'], ['Nachweis-', 'Kriterium η [--]'], ['Nachweis-', 'Art'], ['', '']];
const cell = "h-4 border-r border-b border-[#dadada] bg-white p-0 leading-[15px] ";

function ResultRow({ row }: { row: Row }) {
  return (
    <tr>
      <td className="bg-[#e0e0e0] p-0" />
      <td className={cell + "text-center"}>{row.stab}</td>
      <td className={cell}>
        {row.x && (
          <div className="flex h-[15px] items-center justify-end gap-1 pr-1">
            {row.x}
            {row.half
              ? <svg width="10" height="10" viewBox="0 0 10 10"><text x="0" y="6" fontSize="6" fill="#666">1</text><path d="M2 8L7 1" stroke="#888" strokeWidth="0.700" /><text x="6" y="9" fontSize="6" fill="#666">2</text></svg>
              : <svg width="9" height="7" viewBox="0 0 9 7"><path d="M1 1.500H8M0 5.500H9" stroke="#888" strokeWidth="1" /><path d="M4.500 2L7 5H2Z" fill="#777" /></svg>}
          </div>
        )}
      </td>
      <td className={cell} />
      <td className={cell + "text-center"}>{row.bs}</td>
      <td className={cell + "text-center"}>{row.lk}</td>
      <td className={cell}>
        <div className="flex h-[15px] items-center pr-1 pl-[5px]">
          <div className="h-3 w-[43px] border-x border-[#bbb]">
            <div className="h-3 bg-[#c6f5c6]" style={{ width: `${row.eta * 100}%` }} />
          </div>
          <span className="flex-1 text-right">{row.eta.toFixed(3)}</span>
          <svg width="10" height="8" viewBox="0 0 10 8" className="ml-0.5 shrink-0"><path d="M1 4L4 7L9 1" fill="none" stroke="#2fc030" strokeWidth="2" /></svg>
        </div>
      </td>
      <td className={cell + "pr-1 text-right font-['DejaVu_Sans_Mono',monospace]"}>{row.art}</td>
      <td className={cell + "pl-1 whitespace-nowrap"}>{row.text}</td>
    </tr>
  );
}

function ResultTable() {
  return (
    <table className="w-full table-fixed border-separate border-spacing-0">
      <colgroup>
        <col className="w-[60px]" /><col className="w-[65px]" /><col className="w-[70px]" /><col className="w-[60px]" /><col className="w-[60px]" />
        <col className="w-[65px]" /><col className="w-[108px]" /><col className="w-[100px]" /><col />
      </colgroup>
      <thead>
        <tr>{[0, 1, 2, 3, 4, 5, 6, 7, 8].map(i => <td key={i} className="h-[10px] border-r border-b border-white bg-[#e0e0e0] p-0" />)}</tr>
        <tr className="leading-[13px]">
          <th className="h-8 border-b border-[#c8c8c8] bg-[#e0e0e0] p-0 font-normal">Bau-<br />zustand</th>
          {heads.map((h, i) => (
            <th key={i} className="h-8 border-r border-b border-[#c8c8c8] bg-[#efefef] p-0 font-normal whitespace-nowrap">{h[0]}<br />{h[1]}</th>
          ))}
        </tr>
      </thead>
      {stages.map((s, i) => (
        <tbody key={s.id}>
          {i > 0 && <tr><td className="h-4 bg-[#e0e0e0] p-0" /><td colSpan={8} className="p-0" /></tr>}
          <tr>
            <td className="h-4 bg-[#e0e0e0] p-0 text-center align-top leading-[14px]">{s.id}</td>
            <td colSpan={8} className="border-b border-[#dadada] bg-[#e8effb] p-0 pl-1 leading-[15px]">{s.name}</td>
          </tr>
          {s.rows.map(r => <ResultRow key={r.art} row={r} />)}
        </tbody>
      ))}
    </table>
  );
}

const tabs = ['Ausnutzungen nach Bauzustand', 'Ausnutzungen nach Bemessungssituation', 'Ausnutzungen belastungsweise', 'Ausnutzungen materialweise', 'Ausnutzungen'];

function Pager() {
  const button = "flex w-[18px] items-center justify-center";
  return (
    <div className="flex w-[134px] shrink-0 items-center justify-between">
      <button aria-label="Erste" className={button}><svg width="8" height="8" viewBox="0 0 8 8"><path d="M0 0H1.500V8H0ZM8 0V8L2 4Z" fill="#999" /></svg></button>
      <button aria-label="Vorige" className={button}><svg width="5" height="8" viewBox="0 0 5 8"><path d="M5 0V8L0 4Z" fill="#999" /></svg></button>
      <span className="flex-1 text-center whitespace-nowrap">1 von 7</span>
      <button aria-label="Nächste" className={button}><svg width="5" height="8" viewBox="0 0 5 8"><path d="M0 0V8L5 4Z" fill="#333" /></svg></button>
      <button aria-label="Letzte" className={button}><svg width="8" height="8" viewBox="0 0 8 8"><path d="M8 0H6.500V8H8ZM0 0V8L6 4Z" fill="#333" /></svg></button>
    </div>
  );
}

function ResultPanel() {
  return (
    <section className="mt-1 mb-[3px]">
      <PanelHeader title="Ausnutzung an Stäben nach Bauzustand | Stahlbemessung | EN 1993 | CEN | 2015-06" />
      <nav className="flex h-[21px] items-center gap-4 pl-2">
        {['Gehe zu', 'Bearbeiten', 'Selektion', 'Ansicht', 'Einstellungen'].map(m => <button key={m}>{m}</button>)}
      </nav>
      <div className="flex h-[27px] items-center overflow-hidden border-t border-[#e2e2e6] pl-0.5">
        <div className="flex gap-px">
          <Combo label="Bemessung" value="Stahlbemessung" width="w-[186px]"><Icon name="steel" /></Combo>
          <Arrow left /><Arrow />
        </div>
        <Sep />
        <div className="flex gap-px border-l border-[#dcdce0] pl-0.5">
          <Combo label="Tabelle" value="Ausnutzungen an Stäben" width="w-[258px]"><Icon name="memberSel" /></Combo>
          <Arrow left /><Arrow />
        </div>
        <Sep />
        <Tools names="jumpUp jumpDown" on />
        <div className="w-1 shrink-0 border-r border-[#ddd]" />
        <Tools names="eyeResult valResult" on /><Sep />
        <Tools names="tableDark tableLine" /><Tool name="tableYellow" on /><Sep />
        <Tool name="chart" on /><Sep />
        <Tool name="excel" /><Sep />
        <Tools names="filterWin decimals" /><Sep />
        <Tool name="deselect" /><More /><Sep />
        <Tool name="findText" /><More />
      </div>
      <div className="border-t border-l border-[#c9c9d6] bg-white">
        <ResultTable />
        <div className="h-7 w-[60px] bg-[#f3f3f3]" />
        <div className="mt-1 flex h-3.5 items-center bg-[#f0f0f0]">
          <button aria-label="Links" className="flex w-[17px] justify-center"><svg width="5" height="8" viewBox="0 0 5 8"><path d="M4.500 0.500L1 4L4.500 7.500" fill="none" stroke="#444" strokeWidth="1.500" /></svg></button>
          <div className="h-full w-[112px] bg-[#cdcdcd]" />
          <div className="flex-1" />
          <button aria-label="Rechts" className="flex w-[17px] justify-center"><svg width="5" height="8" viewBox="0 0 5 8"><path d="M0.500 0.500L4 4L0.500 7.500" fill="none" stroke="#444" strokeWidth="1.500" /></svg></button>
        </div>
      </div>
      <div className="flex h-[23px] border-t border-[#c9c9d6]">
        <Pager />
        <div className="flex min-w-0 flex-1 overflow-hidden">
          {tabs.map((t, i) => (
            <button key={t} className={i === 0
              ? "shrink-0 border-x border-b border-[#c9c9d6] bg-white px-[7px]"
              : "mb-0.5 shrink-0 border-r border-b border-[#c9c9d6] bg-[#ececec] px-[7px]"}>{t}</button>
          ))}
        </div>
        <Arrow left bare /><Arrow bare />
      </div>
    </section>
  );
}

function StatusBar() {
  const pressed = "h-[17px] border border-[#c8c8cc] bg-[#ececee] px-[3px]";
  return (
    <footer className="flex h-[21px] items-center pl-[322px] whitespace-nowrap">
      <div className="flex items-center gap-0.5">
        <button className={pressed}>FANG</button>
        <button className="px-1">RASTER</button>
        <button className={pressed}>LRASTER</button>
        <button className={pressed}>OFANG</button>
      </div>
      <span className="w-[116px] px-1">Sichtbarkeitsmodus</span>
      <span className="w-[104px] border-l border-[#d4d4d8]">&nbsp;</span>
      <span className="w-[156px] border-l border-[#d4d4d8] pl-1">KS: Global XYZ</span>
      <span className="w-[64px] border-l border-[#d4d4d8] pl-1">Ebene: XZ</span>
      <span className="w-[76px] border-l border-[#d4d4d8]">&nbsp;</span>
      <span className="w-[76px] border-l border-[#d4d4d8]">&nbsp;</span>
      <span className="flex-1 border-l border-[#d4d4d8]">&nbsp;</span>
      <svg width="12" height="12" viewBox="0 0 12 12" className="self-end"><path d="M9 2H11M9 6H11M5 6H7M9 10H11M5 10H7M1 10H3" stroke="#bbb" strokeWidth="2" /></svg>
    </footer>
  );
}

export default function App() {
  return (
    <div className="flex min-h-screen flex-col border border-[#3a3a3c] bg-[#f7f7f7] font-['Noto_Sans','Open_Sans',sans-serif] text-[11px] leading-4 text-black">
      <TitleBar />
      <Toolbars />
      <main className="flex flex-1">
        <Navigator />
        <div className="flex min-w-0 flex-1 flex-col pl-[3px]">
          <div className="flex min-h-[407px] flex-1 bg-[#888]">
            <ModelWindow
              model={modelA}
              summary="Max. aller Nachweise | max  : 0.294 | min  : 0.050"
              summary2="Stäbe | max η : 0.294 | min η : 0.050"
            />
            <ModelWindow
              active
              model={modelB}
              summary="Max. aller Nachweise | max  : 0.662 | min  : 0.066"
              summary2="Stäbe | max η : 0.662 | min η : 0.066"
            />
          </div>
          <ResultPanel />
        </div>
      </main>
      <StatusBar />
    </div>
  );
}
